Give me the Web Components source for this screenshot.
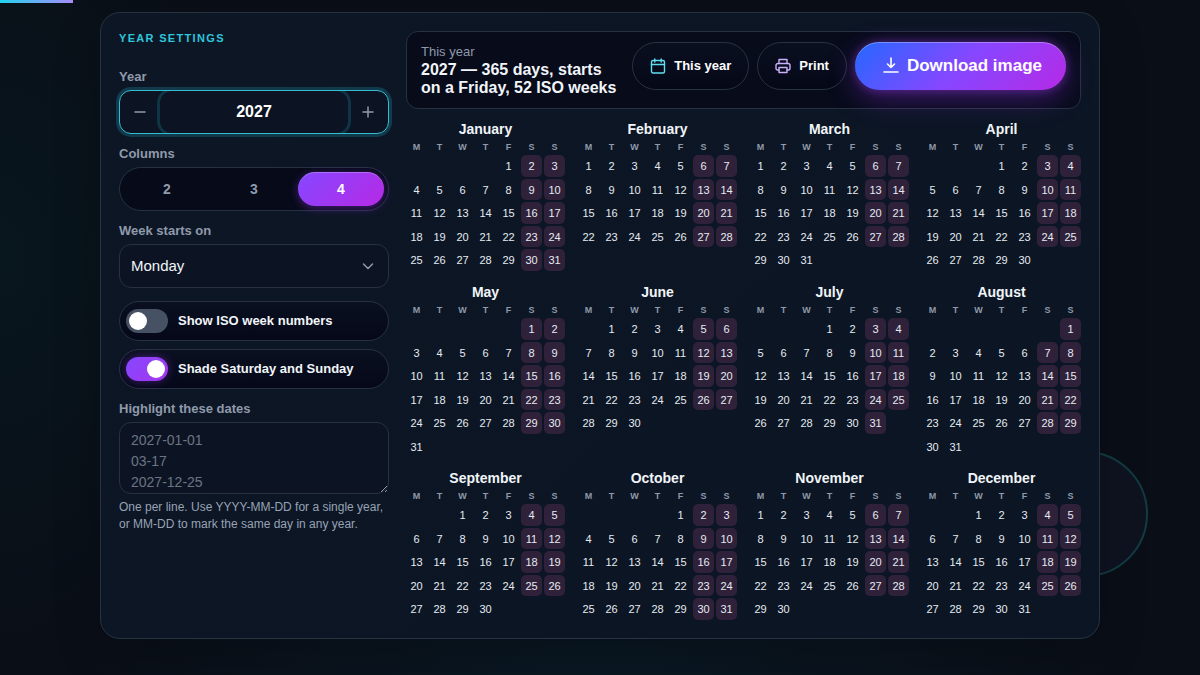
<!DOCTYPE html>
<html lang="en">
<head>
<meta charset="utf-8">
<meta name="viewport" content="width=device-width, initial-scale=1">
<title>Year planner 2027</title>
<style>
  :root {
    --text: #f1f5f9;
    --muted: #8f9aab;
    --line: #263241;
    --cyan: #2fc6da;
    --deep: #060a19;
    --field: #0c1424;
  }
  * { box-sizing: border-box; }
  body {
    margin: 0;
    min-height: 100vh;
    color: var(--text);
    font: 13px/16px "Liberation Sans", Arial, sans-serif;
    background:
      radial-gradient(ellipse 22% 60% at 0% 38%, rgba(4, 34, 38, .4), transparent),
      radial-gradient(ellipse 45% 30% at 50% 100%, rgba(8, 38, 52, .4), transparent),
      #0a0e17;
  }
</style>
</head>
<body>
<year-planner></year-planner>

<script>
const BASE = `<style>
  *, *::before, *::after { box-sizing: border-box; }
  button, input, select, textarea { font: inherit; color: inherit; margin: 0; }
  :host { display: block; }
  .label { display: block; padding: 0; margin: 0 0 6px; font-size: 13px; line-height: 14px; font-weight: 700; color: var(--muted); }
</style>`;

class Base extends HTMLElement {
  constructor() {
    super();
    this.attachShadow({ mode: "open" });
  }
  connectedCallback() {
    this.shadowRoot.innerHTML = BASE + this.render();
    this.ready();
  }
  ready() {}
  $(selector) { return this.shadowRoot.querySelector(selector); }
  emit(name, detail) { this.dispatchEvent(new CustomEvent(name, { detail, bubbles: true, composed: true })); }
}

customElements.define("year-stepper", class extends Base {
  render() {
    return `<style>
      .box { display: flex; height: 44px; border: 1px solid #35bccf; border-radius: 12px; background: var(--field); box-shadow: 0 0 0 3px rgba(34, 211, 238, .2); }
      .inner { display: flex; flex: 1; min-width: 0; overflow: hidden; border-radius: 11px; }
      button { flex: 0 0 40px; display: grid; place-items: center; padding: 0; border: 0; background: none; color: var(--muted); cursor: pointer; }
      input { flex: 1; min-width: 0; border: 0; outline: 0; padding: 0; border-radius: 12px; background: none; text-align: center; font-size: 16px; font-weight: 700; color: #fff; box-shadow: 0 0 0 3px rgba(34, 211, 238, .17); }
      svg { width: 16px; height: 16px; fill: none; stroke: currentColor; stroke-width: 1.5; stroke-linecap: round; }
    </style>
    <label class="label" for="year">Year</label>
    <div class="box"><div class="inner">
      <button type="button" id="down" aria-label="Previous year"><svg viewBox="0 0 16 16"><path d="M3 8h10"/></svg></button>
      <input id="year" type="text" inputmode="numeric" value="2027">
      <button type="button" id="up" aria-label="Next year"><svg viewBox="0 0 16 16"><path d="M3 8h10M8 3v10"/></svg></button>
    </div></div>`;
  }
  ready() {
    const input = this.$("input");
    const step = n => { input.value = Number(input.value) + n; this.emit("yearchange", Number(input.value)); };
    this.$("#down").onclick = () => step(-1);
    this.$("#up").onclick = () => step(1);
    input.onchange = () => step(0);
  }
});

customElements.define("column-picker", class extends Base {
  render() {
    const options = [2, 3, 4].map(n =>
      `<label><input type="radio" name="columns" value="${n}"${n === 4 ? " checked" : ""}><span>${n}</span></label>`).join("");
    return `<style>
      fieldset { border: 0; margin: 0; padding: 0; min-width: 0; }
      .track { display: flex; gap: 1px; height: 44px; padding: 4px; border: 1px solid var(--line); border-radius: 22px; background: var(--deep); }
      .track label { flex: 1; display: grid; cursor: pointer; }
      input { grid-area: 1 / 1; width: 100%; height: 100%; appearance: none; border-radius: 17px; }
      span { grid-area: 1 / 1; place-self: center; font-size: 14px; line-height: 16px; font-weight: 700; color: var(--muted); pointer-events: none; }
      input:checked { background: linear-gradient(135deg, #8647ff, #b62ae6); box-shadow: 0 2px 10px rgba(147, 51, 234, .45), inset 0 1px 0 rgba(255, 255, 255, .25); }
      input:checked + span { color: #fff; }
    </style>
    <fieldset><legend class="label">Columns</legend><div class="track">${options}</div></fieldset>`;
  }
  ready() {
    this.shadowRoot.onchange = e => this.emit("columnschange", Number(e.target.value));
  }
});

customElements.define("week-start", class extends Base {
  render() {
    return `<style>
      .box { display: grid; align-items: center; }
      select { grid-area: 1 / 1; width: 100%; height: 44px; appearance: none; padding: 0 40px 0 11px; border: 1px solid var(--line); border-radius: 12px; background: var(--field); font-size: 15px; color: var(--text); }
      svg { grid-area: 1 / 1; justify-self: end; margin-right: 13px; width: 16px; height: 16px; fill: none; stroke: var(--muted); stroke-width: 1.5; stroke-linecap: round; stroke-linejoin: round; pointer-events: none; }
    </style>
    <label class="label" for="start">Week starts on</label>
    <div class="box">
      <select id="start"><option>Monday</option><option>Sunday</option></select>
      <svg viewBox="0 0 16 16"><path d="M3.5 6 8 10.5 12.5 6"/></svg>
    </div>`;
  }
});

customElements.define("toggle-row", class extends Base {
  render() {
    return `<style>
      label { display: flex; align-items: center; gap: 10px; height: 40px; padding: 0 6px; border: 1px solid var(--line); border-radius: 20px; background: linear-gradient(#0a1020, #050818); font-size: 13px; font-weight: 700; cursor: pointer; }
      input { flex: none; display: grid; align-items: center; width: 42px; height: 24px; padding: 0 3px; appearance: none; border-radius: 12px; background: #475164; }
      input::before { content: ""; width: 18px; height: 18px; border-radius: 50%; background: #fff; }
      input:checked { justify-items: end; background: linear-gradient(135deg, #8647ff, #a436ee); box-shadow: 0 0 10px rgba(147, 51, 234, .45); }
    </style>
    <label><input type="checkbox" role="switch"${this.hasAttribute("checked") ? " checked" : ""}><slot></slot></label>`;
  }
  ready() {
    this.$("input").onchange = e => this.emit("toggle-" + this.getAttribute("name"), e.target.checked);
  }
});

customElements.define("date-notes", class extends Base {
  render() {
    return `<style>
      textarea { display: block; width: 100%; height: 72px; padding: 7px 11px; border: 1px solid var(--line); border-radius: 12px; background: var(--field); font-size: 14px; line-height: 21px; resize: vertical; overflow: hidden; }
      textarea::placeholder { color: #6b7483; opacity: 1; }
      p { margin: 5px 0 0; font-size: 12px; line-height: 17px; color: #97a3b5; }
    </style>
    <label class="label" for="dates">Highlight these dates</label>
    <textarea id="dates" aria-describedby="hint" placeholder="2027-01-01&#10;03-17&#10;2027-12-25"></textarea>
    <p id="hint">One per line. Use YYYY-MM-DD for a single year, or MM-DD to mark the same day in any year.</p>`;
  }
});

customElements.define("settings-panel", class extends Base {
  render() {
    return `<style>
      h2 { margin: 0 0 25px; font-size: 11px; line-height: 14px; letter-spacing: .12em; text-transform: uppercase; color: var(--cyan); }
      form, .toggles { display: flex; flex-direction: column; }
      form { gap: 13px; }
      .toggles { gap: 8px; }
    </style>
    <h2>Year settings</h2>
    <form>
      <year-stepper></year-stepper>
      <column-picker></column-picker>
      <week-start></week-start>
      <div class="toggles">
        <toggle-row name="iso">Show ISO week numbers</toggle-row>
        <toggle-row name="shade" checked>Shade Saturday and Sunday</toggle-row>
      </div>
      <date-notes></date-notes>
    </form>`;
  }
});

const ICONS = {
  calendar: `<svg viewBox="0 0 16 16" stroke="#5fdff0"><rect x="1.5" y="2.5" width="13" height="12.5" rx="1.5"/><path d="M1.5 6.5h13M4.8 1v3M11.2 1v3"/></svg>`,
  printer: `<svg viewBox="0 0 16 16" stroke="#c9b0fb"><path d="M4 5.500v-4h8v4"/><path d="M4 12H2.500A1.500 1.500 0 0 1 1 10.500V7.500a2 2 0 0 1 2-2h10a2 2 0 0 1 2 2v3a1.500 1.500 0 0 1-1.500 1.500H12"/><rect x="4" y="9.500" width="8" height="5"/></svg>`,
  download: `<svg viewBox="0 0 16 16" stroke="#fff"><path d="M8 1v9.500M4.500 7 8 10.500 11.500 7M1 15h14"/></svg>`
};

customElements.define("action-button", class extends Base {
  render() {
    return `<style>
      button { display: flex; align-items: center; gap: 8px; height: 48px; padding: 0 17px; border: 1px solid var(--line); border-radius: 24px; background: linear-gradient(#0a0f20, #050817); font-size: 13px; font-weight: 700; color: #fff; white-space: nowrap; cursor: pointer; }
      svg { width: 16px; height: 16px; fill: none; stroke-width: 1.4; stroke-linecap: round; stroke-linejoin: round; }
      :host([primary]) button { padding: 0 24px 0 28px; border: 0; font-size: 17px; background: linear-gradient(135deg, #2468ff, #8647ff 50%, #b62ae6); box-shadow: 0 8px 28px rgba(147, 51, 234, .4), 0 0 10px rgba(168, 70, 240, .4), inset 0 1px 0 rgba(255, 255, 255, .3); }
      :host([primary]) svg { stroke-width: 1.6; margin-bottom: 3px; }
    </style>
    <button type="button">${ICONS[this.getAttribute("icon")]}<slot></slot></button>`;
  }
});

customElements.define("summary-bar", class extends Base {
  render() {
    return `<style>
      header { display: flex; align-items: flex-start; gap: 12px; padding: 10px 14px 11px; border: 1px solid var(--line); border-radius: 12px; background: #070b1a; }
      .text { flex: 1; min-width: 0; }
      p { margin: 0; font-size: 13px; line-height: 19px; color: var(--muted); }
      h1 { margin: 0; font-size: 16px; line-height: 18px; }
      .actions { display: flex; gap: 8px; }
    </style>
    <header>
      <div class="text"><p>This year</p><h1><slot></slot></h1></div>
      <div class="actions">
        <action-button icon="calendar">This year</action-button>
        <action-button icon="printer">Print</action-button>
        <action-button icon="download" primary>Download image</action-button>
      </div>
    </header>`;
  }
});

customElements.define("month-grid", class extends Base {
  render() {
    const year = Number(this.getAttribute("year")), month = Number(this.getAttribute("month"));
    const first = new Date(year, month, 1);
    const name = first.toLocaleString("en", { month: "long" });
    const lead = (first.getDay() + 6) % 7;
    const days = new Date(year, month + 1, 0).getDate();
    let rows = "";
    for (let start = 1 - lead; start <= days; start += 7) {
      rows += "<tr>";
      for (let i = 0; i < 7; i++) {
        const day = start + i;
        rows += day < 1 || day > days ? "<td></td>" : `<td${i > 4 ? ' class="weekend"' : ""}>${day}</td>`;
      }
      rows += "</tr>";
    }
    return `<style>
      h3 { margin: 0 0 2px; font-size: 14px; line-height: 16px; text-align: center; }
      table { width: calc(100% + 4px); margin: 0 -2px -2px; table-layout: fixed; border-collapse: separate; border-spacing: 2px; text-align: center; }
      th, td { padding: 0; }
      th { font-size: 9px; line-height: 12px; color: var(--muted); }
      td { height: 22px; font-size: 11px; line-height: 12px; color: #e6ebf2; border-radius: 5px; }
      tr:nth-child(even) td { height: 21px; }
      .weekend { background: var(--weekend, #2f213a); }
    </style>
    <h3 id="name">${name}</h3>
    <table aria-labelledby="name">
      <thead><tr>${[..."MTWTFSS"].map(d => `<th scope="col">${d}</th>`).join("")}</tr></thead>
      <tbody>${rows}</tbody>
    </table>`;
  }
});

customElements.define("year-calendar", class extends Base {
  render() {
    const year = this.getAttribute("year");
    return `<style>
      .months { display: grid; grid-template-columns: repeat(var(--columns, 4), minmax(0, 1fr)); gap: 13px; align-items: start; }
    </style>
    <div class="months">${Array.from({ length: 12 }, (_, m) => `<month-grid year="${year}" month="${m}"></month-grid>`).join("")}</div>`;
  }
});

customElements.define("year-planner", class extends Base {
  render() {
    return `<style>
      :host { padding: 12px 24px; }
      .progress { position: absolute; top: 0; left: 0; width: 73px; height: 3px; background: linear-gradient(90deg, #22d3ee, #a78bfa); }
      .ring { position: absolute; top: 451px; right: 52px; width: 126px; height: 126px; border: 2px solid #123c44; border-radius: 50%; background: #0f1320; }
      .card { position: relative; display: grid; grid-template-columns: 270px minmax(0, 1fr); gap: 17px; max-width: 1000px; margin: 0 auto; padding: 18px; border: 1px solid #263342; border-radius: 20px; background: linear-gradient(135deg, #0d1625, #0b1523); box-shadow: 0 16px 48px rgba(0, 0, 0, .2); }
      main { display: flex; flex-direction: column; gap: 12px; min-width: 0; }
    </style>
    <div class="progress"></div>
    <div class="ring"></div>
    <div class="card">
      <settings-panel></settings-panel>
      <main>
        <summary-bar></summary-bar>
        <year-calendar year="2027"></year-calendar>
      </main>
    </div>`;
  }
  ready() {
    this.show(2027);
    this.addEventListener("yearchange", e => this.show(e.detail));
    this.addEventListener("columnschange", e => this.style.setProperty("--columns", e.detail));
    this.addEventListener("toggle-shade", e => this.style.setProperty("--weekend", e.detail ? "#2f213a" : "transparent"));
  }
  show(year) {
    const first = new Date(year, 0, 1), last = new Date(year, 11, 31);
    const days = Math.round((last - first) / 864e5) + 1;
    const weeks = first.getDay() === 4 || last.getDay() === 4 ? 53 : 52;
    const weekday = first.toLocaleString("en", { weekday: "long" });
    this.$("summary-bar").textContent = `${year} — ${days} days, starts on a ${weekday}, ${weeks} ISO weeks`;
    const calendar = document.createElement("year-calendar");
    calendar.setAttribute("year", year);
    this.$("year-calendar").replaceWith(calendar);
  }
});
</script>
</body>
</html>
